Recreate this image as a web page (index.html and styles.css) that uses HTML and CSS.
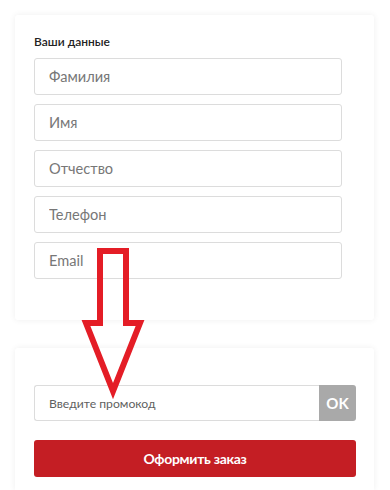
FILE: index.html
```html
<!DOCTYPE html>
<html lang="ru">
<head>
<meta charset="utf-8">
<link rel="stylesheet" href="styles.css">
</head>
<body>
<div class="page">
  <section class="card card-data">
    <div class="label">Ваши данные</div>
    <div class="fields">
      <input class="field" type="text" placeholder="Фамилия">
      <input class="field" type="text" placeholder="Имя">
      <input class="field" type="text" placeholder="Отчество">
      <input class="field" type="text" placeholder="Телефон">
      <input class="field" type="text" placeholder="Email">
    </div>
  </section>
  <section class="card card-order">
    <div class="promo">
      <input class="promo-input" type="text" placeholder="Введите промокод">
      <button class="promo-ok" type="button">OK</button>
    </div>
    <button class="order-btn" type="button">Оформить заказ</button>
  </section>
  <svg class="arrow" width="390" height="490" viewBox="0 0 390 490">
    <path d="M100 251 L126 251 L126 323 L140 323 L113 391 L86 323 L100 323 Z" fill="none" stroke="#e41d26" stroke-width="6" stroke-linejoin="miter" stroke-miterlimit="10"/>
  </svg>
</div>
</body>
</html>
```
FILE: styles.css
```css
* { box-sizing: border-box; }
html, body { margin: 0; padding: 0; background: #fff; }
body { font-family: Lato, "Open Sans", "Noto Sans", sans-serif; overflow: hidden; }
.page {
  position: relative;
  width: 390px;
  height: 490px;
  padding: 15px 16px 0 15px;
  display: flex;
  flex-direction: column;
  gap: 28px;
}
.card {
  background: #fff;
  border-radius: 3px;
  box-shadow: 0 0 6px rgba(0, 0, 0, 0.07);
}
.card-data {
  padding: 19px 32px 41px 19px;
}
.label {
  font-size: 12px;
  line-height: 16px;
  font-weight: 600;
  color: #222;
  margin-bottom: 8px;
}
.fields {
  display: flex;
  flex-direction: column;
  gap: 9px;
}
.field {
  height: 37px;
  width: 100%;
  border: 1px solid #dcdcdc;
  border-radius: 3px;
  padding: 0 14px;
  font-family: Lato, "Open Sans", sans-serif;
  font-size: 14.6px;
  color: #333;
  outline: none;
  background: #fff;
}
.field::placeholder { color: #777; }
.card-order {
  flex: 1;
  padding: 37px 18px 0 19px;
  border-bottom-left-radius: 0;
  border-bottom-right-radius: 0;
}
.promo {
  display: flex;
  height: 36px;
}
.promo-input {
  flex: 1;
  height: 36px;
  border: 1px solid #dcdcdc;
  border-right: none;
  border-radius: 3px 0 0 3px;
  padding: 0 14px;
  font-family: Lato, "Open Sans", sans-serif;
  font-size: 12.2px;
  outline: none;
}
.promo-input::placeholder { color: #5f5f5f; }
.promo-ok {
  width: 37px;
  height: 36px;
  border: none;
  border-radius: 0 3px 3px 0;
  background: #a9a9a9;
  color: #fff;
  font-family: Lato, "Open Sans", sans-serif;
  font-weight: 700;
  font-size: 15px;
  padding: 0;
}
.order-btn {
  display: block;
  width: 100%;
  height: 37px;
  margin-top: 19px;
  border: none;
  border-radius: 3px;
  background: #c41e24;
  color: #fff;
  font-family: Lato, "Open Sans", sans-serif;
  font-weight: 700;
  font-size: 14px;
  letter-spacing: -0.3px;
  padding: 0;
}
.arrow {
  position: absolute;
  left: 0;
  top: 0;
  pointer-events: none;
}
```
